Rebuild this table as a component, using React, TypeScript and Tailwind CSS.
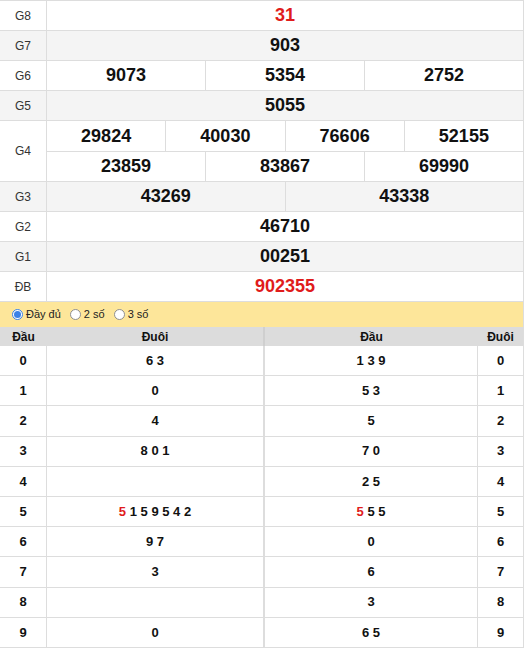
import React from 'react'

const font = { fontFamily: '"Liberation Sans", Arial, sans-serif' }

type Prize = { label: string; rows: string[][]; red?: boolean; gray?: boolean }

const prizes: Prize[] = [
  { label: 'G8', rows: [['31']], red: true },
  { label: 'G7', rows: [['903']], gray: true },
  { label: 'G6', rows: [['9073', '5354', '2752']] },
  { label: 'G5', rows: [['5055']], gray: true },
  { label: 'G4', rows: [['29824', '40030', '76606', '52155'], ['23859', '83867', '69990']] },
  { label: 'G3', rows: [['43269', '43338']], gray: true },
  { label: 'G2', rows: [['46710']] },
  { label: 'G1', rows: [['00251']], gray: true },
  { label: 'ĐB', rows: [['902355']], red: true },
]

// left: đuôi theo đầu ; right: đầu theo đuôi
const loto: { left: string[]; right: string[] }[] = [
  { left: ['6', '3'], right: ['1', '3', '9'] },
  { left: ['0'], right: ['5', '3'] },
  { left: ['4'], right: ['5'] },
  { left: ['8', '0', '1'], right: ['7', '0'] },
  { left: [], right: ['2', '5'] },
  { left: ['5', '1', '5', '9', '5', '4', '2'], right: ['5', '5', '5'] },
  { left: ['9', '7'], right: ['0'] },
  { left: ['3'], right: ['6'] },
  { left: [], right: ['3'] },
  { left: ['0'], right: ['6', '5'] },
]

function Digits({ list, redFirst }: { list: string[]; redFirst: boolean }) {
  return (
    <span className="whitespace-pre">
      {list.map((d, i) => (
        <React.Fragment key={i}>
          {i > 0 ? ' ' : ''}
          <span className={redFirst && i === 0 ? 'text-[#e01c1c]' : ''}>{d}</span>
        </React.Fragment>
      ))}
    </span>
  )
}

function Radio({ checked, label }: { checked?: boolean; label: string }) {
  return (
    <label className="flex items-center gap-[3px]">
      <span
        className={`flex h-[11px] w-[11px] items-center justify-center rounded-full border ${
          checked ? 'border-[#3b82e6] bg-white' : 'border-[#8f8f8f] bg-white'
        }`}
      >
        {checked && <span className="h-[7px] w-[7px] rounded-full bg-[#3b82e6]" />}
      </span>
      <span>{label}</span>
    </label>
  )
}

export default function App() {
  return (
    <div className="w-[525px] bg-white text-[#111]" style={font}>
      <div className="w-[524px] border-r border-t border-[#ddd]">
        {prizes.map((p) => (
          <div key={p.label} className={`flex border-b border-[#ddd] ${p.gray ? 'bg-[#f4f4f4]' : 'bg-white'}`}>
            <div className="flex w-[47px] shrink-0 items-center justify-center border-r border-[#ddd] text-[12px] text-[#333]">
              {p.label}
            </div>
            <div className="flex flex-1 flex-col">
              {p.rows.map((r, ri) => {
                const last = ri === p.rows.length - 1
                return (
                  <div
                    key={ri}
                    className={last ? 'flex h-[29px]' : 'flex h-[31px] border-b border-[#ddd]'}
                  >
                    {r.map((n, ni) => (
                      <div
                        key={ni}
                        className={`flex flex-1 items-center justify-center text-[18px] font-bold ${
                          ni > 0 ? 'border-l border-[#ddd]' : ''
                        } ${p.red ? 'text-[#e01c1c]' : 'text-[#111]'}`}
                      >
                        {n}
                      </div>
                    ))}
                  </div>
                )
              })}
            </div>
          </div>
        ))}

        <div className="flex h-[25px] items-center gap-[9px] bg-[#fde69a] px-[12px] text-[11px] text-[#222]">
          <Radio checked label="Đầy đủ" />
          <Radio label="2 số" />
          <Radio label="3 số" />
        </div>

        <div className="flex h-[19px] bg-[#dcdcdc] text-[12px] font-bold">
          <div className="flex w-[47px] items-center justify-center">Đầu</div>
          <div className="flex w-[216px] items-center justify-center">Đuôi</div>
          <div className="flex flex-1 items-center justify-center border-l-2 border-[#cfcfcf]">Đầu</div>
          <div className="flex w-[45px] items-center justify-center">Đuôi</div>
        </div>

        {loto.map((row, i) => (
          <div key={i} className="flex h-[30.2px] border-b border-[#ddd] text-[13px] font-bold">
            <div className="flex w-[47px] items-center justify-center border-r border-[#ddd]">{i}</div>
            <div className="flex w-[216px] items-center justify-center">
              <Digits list={row.left} redFirst={i === 5} />
            </div>
            <div className="flex flex-1 items-center justify-center border-l-2 border-r border-[#ddd]">
              <Digits list={row.right} redFirst={i === 5} />
            </div>
            <div className="flex w-[45px] items-center justify-center">{i}</div>
          </div>
        ))}
      </div>
    </div>
  )
}
